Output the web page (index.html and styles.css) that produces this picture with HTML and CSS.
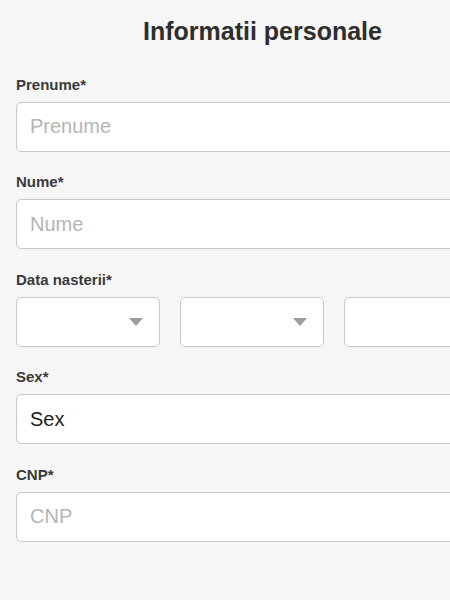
FILE: index.html
```html
<!DOCTYPE html>
<html lang="ro">
<head>
<meta charset="utf-8">
<title>Informatii personale</title>
<link rel="stylesheet" href="styles.css">
</head>
<body>
<div class="page">
  <form class="form">
    <h1 class="title">Informatii personale</h1>

    <div class="field">
      <label class="label" for="prenume">Prenume*</label>
      <input class="input" id="prenume" type="text" placeholder="Prenume">
    </div>

    <div class="field">
      <label class="label" for="nume">Nume*</label>
      <input class="input" id="nume" type="text" placeholder="Nume">
    </div>

    <div class="field">
      <span class="label">Data nasterii*</span>
      <div class="date-row">
        <div class="select">
          <svg class="arrow" width="14" height="8" viewBox="0 0 14 8"><path d="M0 0H14L7 8Z" fill="#9d9ba3"/></svg>
        </div>
        <div class="select">
          <svg class="arrow" width="14" height="8" viewBox="0 0 14 8"><path d="M0 0H14L7 8Z" fill="#9d9ba3"/></svg>
        </div>
        <div class="select">
          <svg class="arrow" width="14" height="8" viewBox="0 0 14 8"><path d="M0 0H14L7 8Z" fill="#9d9ba3"/></svg>
        </div>
      </div>
    </div>

    <div class="field">
      <span class="label">Sex*</span>
      <div class="input value">Sex</div>
    </div>

    <div class="field">
      <label class="label" for="cnp">CNP*</label>
      <input class="input" id="cnp" type="text" placeholder="CNP">
    </div>
  </form>
</div>
</body>
</html>
```

FILE: styles.css
```css
html, body {
  margin: 0;
  padding: 0;
  background: #f6f6f6;
}

body {
  font-family: "Liberation Sans", Arial, sans-serif;
  color: #333;
  overflow: hidden;
}

.page {
  width: 450px;
  height: 600px;
  overflow: hidden;
  padding-left: 16px;
  box-sizing: border-box;
}

.form {
  width: 493px;
  margin: 0;
}

.title {
  margin: 15.5px 0 30px;
  font-size: 25px;
  line-height: 30px;
  font-weight: bold;
  text-align: center;
  color: #2e2e2e;
}

.field {
  margin-bottom: 21.5px;
}

.label {
  display: block;
  font-size: 15px;
  line-height: 18px;
  font-weight: bold;
  color: #3a3a3a;
  margin-bottom: 8px;
}

.input {
  display: flex;
  align-items: center;
  width: 100%;
  height: 50px;
  box-sizing: border-box;
  margin: 0;
  padding: 0 13px;
  border: 1px solid #c9c9c9;
  border-radius: 5px;
  background: #fff;
  font-family: "Liberation Sans", Arial, sans-serif;
  font-size: 20px;
  color: #222;
  outline: none;
}

.input::placeholder {
  color: #b4b4b4;
  opacity: 1;
}

.date-row {
  display: flex;
  gap: 20px;
}

.select {
  flex: 0 0 144px;
  height: 50px;
  box-sizing: border-box;
  border: 1px solid #c9c9c9;
  border-radius: 5px;
  background: #fff;
  display: flex;
  align-items: center;
  justify-content: flex-end;
  padding-right: 16px;
}

.arrow {
  display: block;
}
```
